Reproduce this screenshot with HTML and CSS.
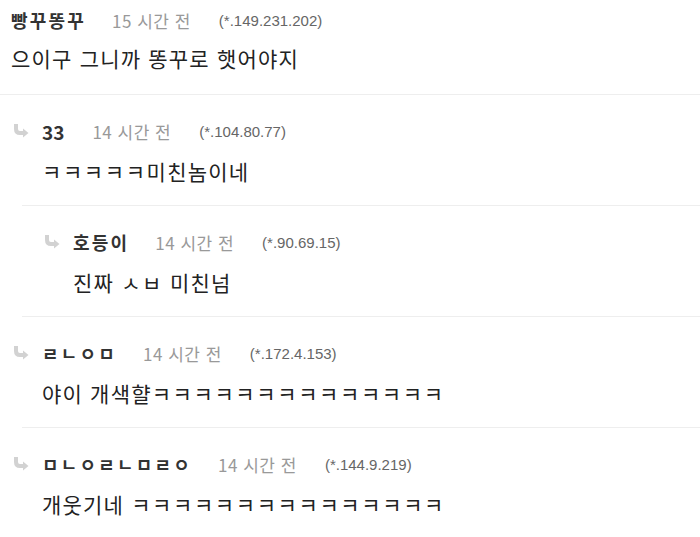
FILE: index.html
```html
<!DOCTYPE html>
<html lang="ko">
<head>
    <meta charset="UTF-8">
    <meta name="viewport" content="width=device-width, initial-scale=1.0">
    <title>댓글</title>
    <link rel="stylesheet" href="styles.css">
</head>
<body>
    <div class="comments">
        <div class="comment first">
            <div class="head">
                <span class="name">빵꾸똥꾸</span>
                <span class="time">15 시간 전</span>
                <span class="ip">(*.149.231.202)</span>
            </div>
            <p class="text">으이구 그니까 똥꾸로 햇어야지</p>
        </div>
        <div class="divider full"></div>

        <div class="comment reply">
            <div class="head">
                <svg class="arrow" viewBox="0 0 16 14"><path d="M3 0 V5 Q3 9 7 9 H11" /><polygon points="10,4.5 15.5,9 10,13.5" /></svg>
                <span class="name tight">33</span>
                <span class="time">14 시간 전</span>
                <span class="ip">(*.104.80.77)</span>
            </div>
            <p class="text"><span class="kk">ㅋㅋㅋㅋㅋ</span>미친놈이네</p>
        </div>
        <div class="divider"></div>

        <div class="comment reply deep">
            <div class="head">
                <svg class="arrow" viewBox="0 0 16 14"><path d="M3 0 V5 Q3 9 7 9 H11" /><polygon points="10,4.5 15.5,9 10,13.5" /></svg>
                <span class="name">호등이</span>
                <span class="time">14 시간 전</span>
                <span class="ip">(*.90.69.15)</span>
            </div>
            <p class="text">진짜 <span class="kk">ㅅㅂ</span> 미친넘</p>
        </div>
        <div class="divider"></div>

        <div class="comment reply">
            <div class="head">
                <svg class="arrow" viewBox="0 0 16 14"><path d="M3 0 V5 Q3 9 7 9 H11" /><polygon points="10,4.5 15.5,9 10,13.5" /></svg>
                <span class="name">ㄹㄴㅇㅁ</span>
                <span class="time">14 시간 전</span>
                <span class="ip">(*.172.4.153)</span>
            </div>
            <p class="text">야이 개색햘<span class="kk">ㅋㅋㅋㅋㅋㅋㅋㅋㅋㅋㅋㅋㅋㅋ</span></p>
        </div>
        <div class="divider"></div>

        <div class="comment reply">
            <div class="head">
                <svg class="arrow" viewBox="0 0 16 14"><path d="M3 0 V5 Q3 9 7 9 H11" /><polygon points="10,4.5 15.5,9 10,13.5" /></svg>
                <span class="name">ㅁㄴㅇㄹㄴㅁㄹㅇ</span>
                <span class="time">14 시간 전</span>
                <span class="ip">(*.144.9.219)</span>
            </div>
            <p class="text">개웃기네 <span class="kk">ㅋㅋㅋㅋㅋㅋㅋㅋㅋㅋㅋㅋㅋㅋㅋ</span></p>
        </div>
    </div>
</body>
</html>
```

FILE: styles.css
```css
*{
    margin: 0px;
    padding: 0px;
    box-sizing: border-box;
}
body{
    background-color: #fff;
    font-family: "Noto Sans CJK KR", "Noto Sans", sans-serif;
    color: #222;
}
.comment{
    padding: 26px 0px 22px 13px;
}
.comment.first{
    padding: 10px 0px 24px 11px;
}
.comment.deep{
    padding-left: 44px;
}
.head{
    display: flex;
    align-items: center;
    height: 20px;
}
.arrow{
    width: 16px;
    height: 14px;
    margin-right: 13px;
    fill: #d2d2d2;
}
.arrow path{
    fill: none;
    stroke: #d2d2d2;
    stroke-width: 4;
}
.name{
    font-size: 18px;
    font-weight: bold;
    letter-spacing: 2.2px;
    color: #333;
    margin-right: 26px;
}
.name.tight{
    font-size: 19px;
    letter-spacing: 0px;
    margin-right: 28px;
}
.time{
    font-size: 17px;
    letter-spacing: 0.5px;
    color: #999;
    margin-right: 28px;
}
.ip{
    font-family: "Liberation Sans", Arial, sans-serif;
    font-size: 15px;
    color: #666;
}
.text{
    font-size: 21px;
    letter-spacing: 1.2px;
    line-height: 24px;
    margin-top: 18px;
}
.text .kk{
    letter-spacing: 1.6px;
}
.comment.first .text{
    margin-top: 16px;
}
.reply .text{
    padding-left: 29px;
}
.divider{
    height: 1px;
    margin-left: 22px;
    background-color: #eee;
}
.divider.full{
    margin-left: 0px;
}
```
